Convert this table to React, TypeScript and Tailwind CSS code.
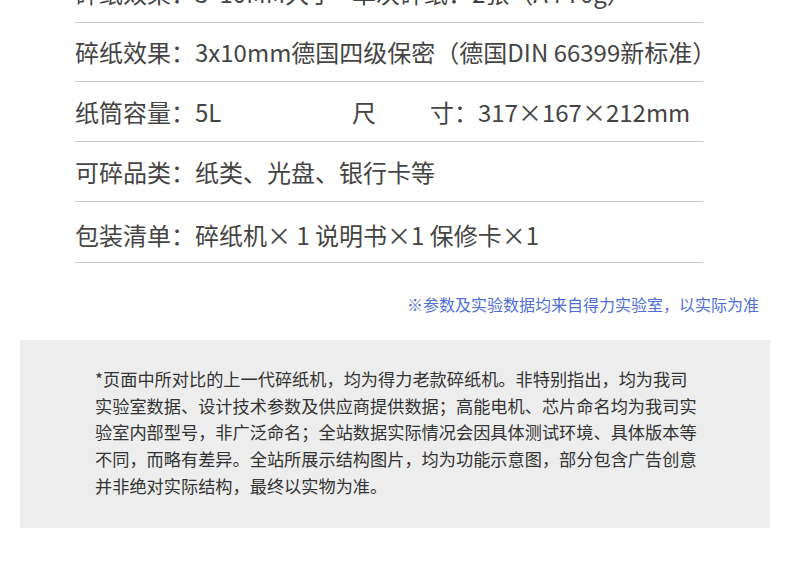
export default function App() {
  const font = { fontFamily: '"Noto Sans CJK SC", "Noto Sans", sans-serif' };

  return (
    <div className="w-[790px] h-[573px] overflow-hidden bg-white" style={font}>
      {/* spec rows */}
      <div className="ml-[75px] w-[628px] -mt-[37px] text-[24px] text-[#444] leading-none">
        <div className="h-[60px] flex items-center border-b border-[#c8c8c8]">
          <span className="w-[277px] whitespace-nowrap">碎纸效果：3*10MM大于</span>
          <span className="whitespace-nowrap">单次碎纸：2张（A4 70g）</span>
        </div>
        <div className="h-[59px] flex items-center border-b border-[#c8c8c8]">
          <span className="whitespace-nowrap">碎纸效果：3x10mm德国四级保密（德国DIN 66399新标准）</span>
        </div>
        <div className="h-[60px] flex items-center border-b border-[#c8c8c8]">
          <span className="w-[277px] whitespace-nowrap">纸筒容量：5L</span>
          <span className="w-[126px] flex justify-between">
            <span>尺</span>
            <span>寸：</span>
          </span>
          <span className="whitespace-nowrap">317×167×212mm</span>
        </div>
        <div className="h-[60px] flex items-center border-b border-[#c8c8c8]">
          <span className="whitespace-nowrap">可碎品类：纸类、光盘、银行卡等</span>
        </div>
        <div className="h-[61px] pt-[5px] flex items-center border-b border-[#c8c8c8]">
          <span className="whitespace-pre">包装清单：碎纸机× 1 说明书×1 保修卡×1</span>
        </div>
      </div>

      {/* note */}
      <div className="mt-[29px] pr-[31px] flex justify-end">
        <p className="text-[16px] leading-[24px] text-[#4f6fd6] whitespace-nowrap">
          ※参数及实验数据均来自得力实验室，以实际为准
        </p>
      </div>

      {/* disclaimer */}
      <div className="mx-[20px] mt-[24px] h-[188px] bg-[#ededed] pl-[75px] pt-[26px]">
        <p className="w-[604px] text-[17.2px] leading-[26.7px] text-[#333]">
          *页面中所对比的上一代碎纸机，均为得力老款碎纸机。非特别指出，均为我司实验室数据、设计技术参数及供应商提供数据；高能电机、芯片命名均为我司实验室内部型号，非广泛命名；全站数据实际情况会因具体测试环境、具体版本等不同，而略有差异。全站所展示结构图片，均为功能示意图，部分包含广告创意并非绝对实际结构，最终以实物为准。
        </p>
      </div>
    </div>
  );
}
